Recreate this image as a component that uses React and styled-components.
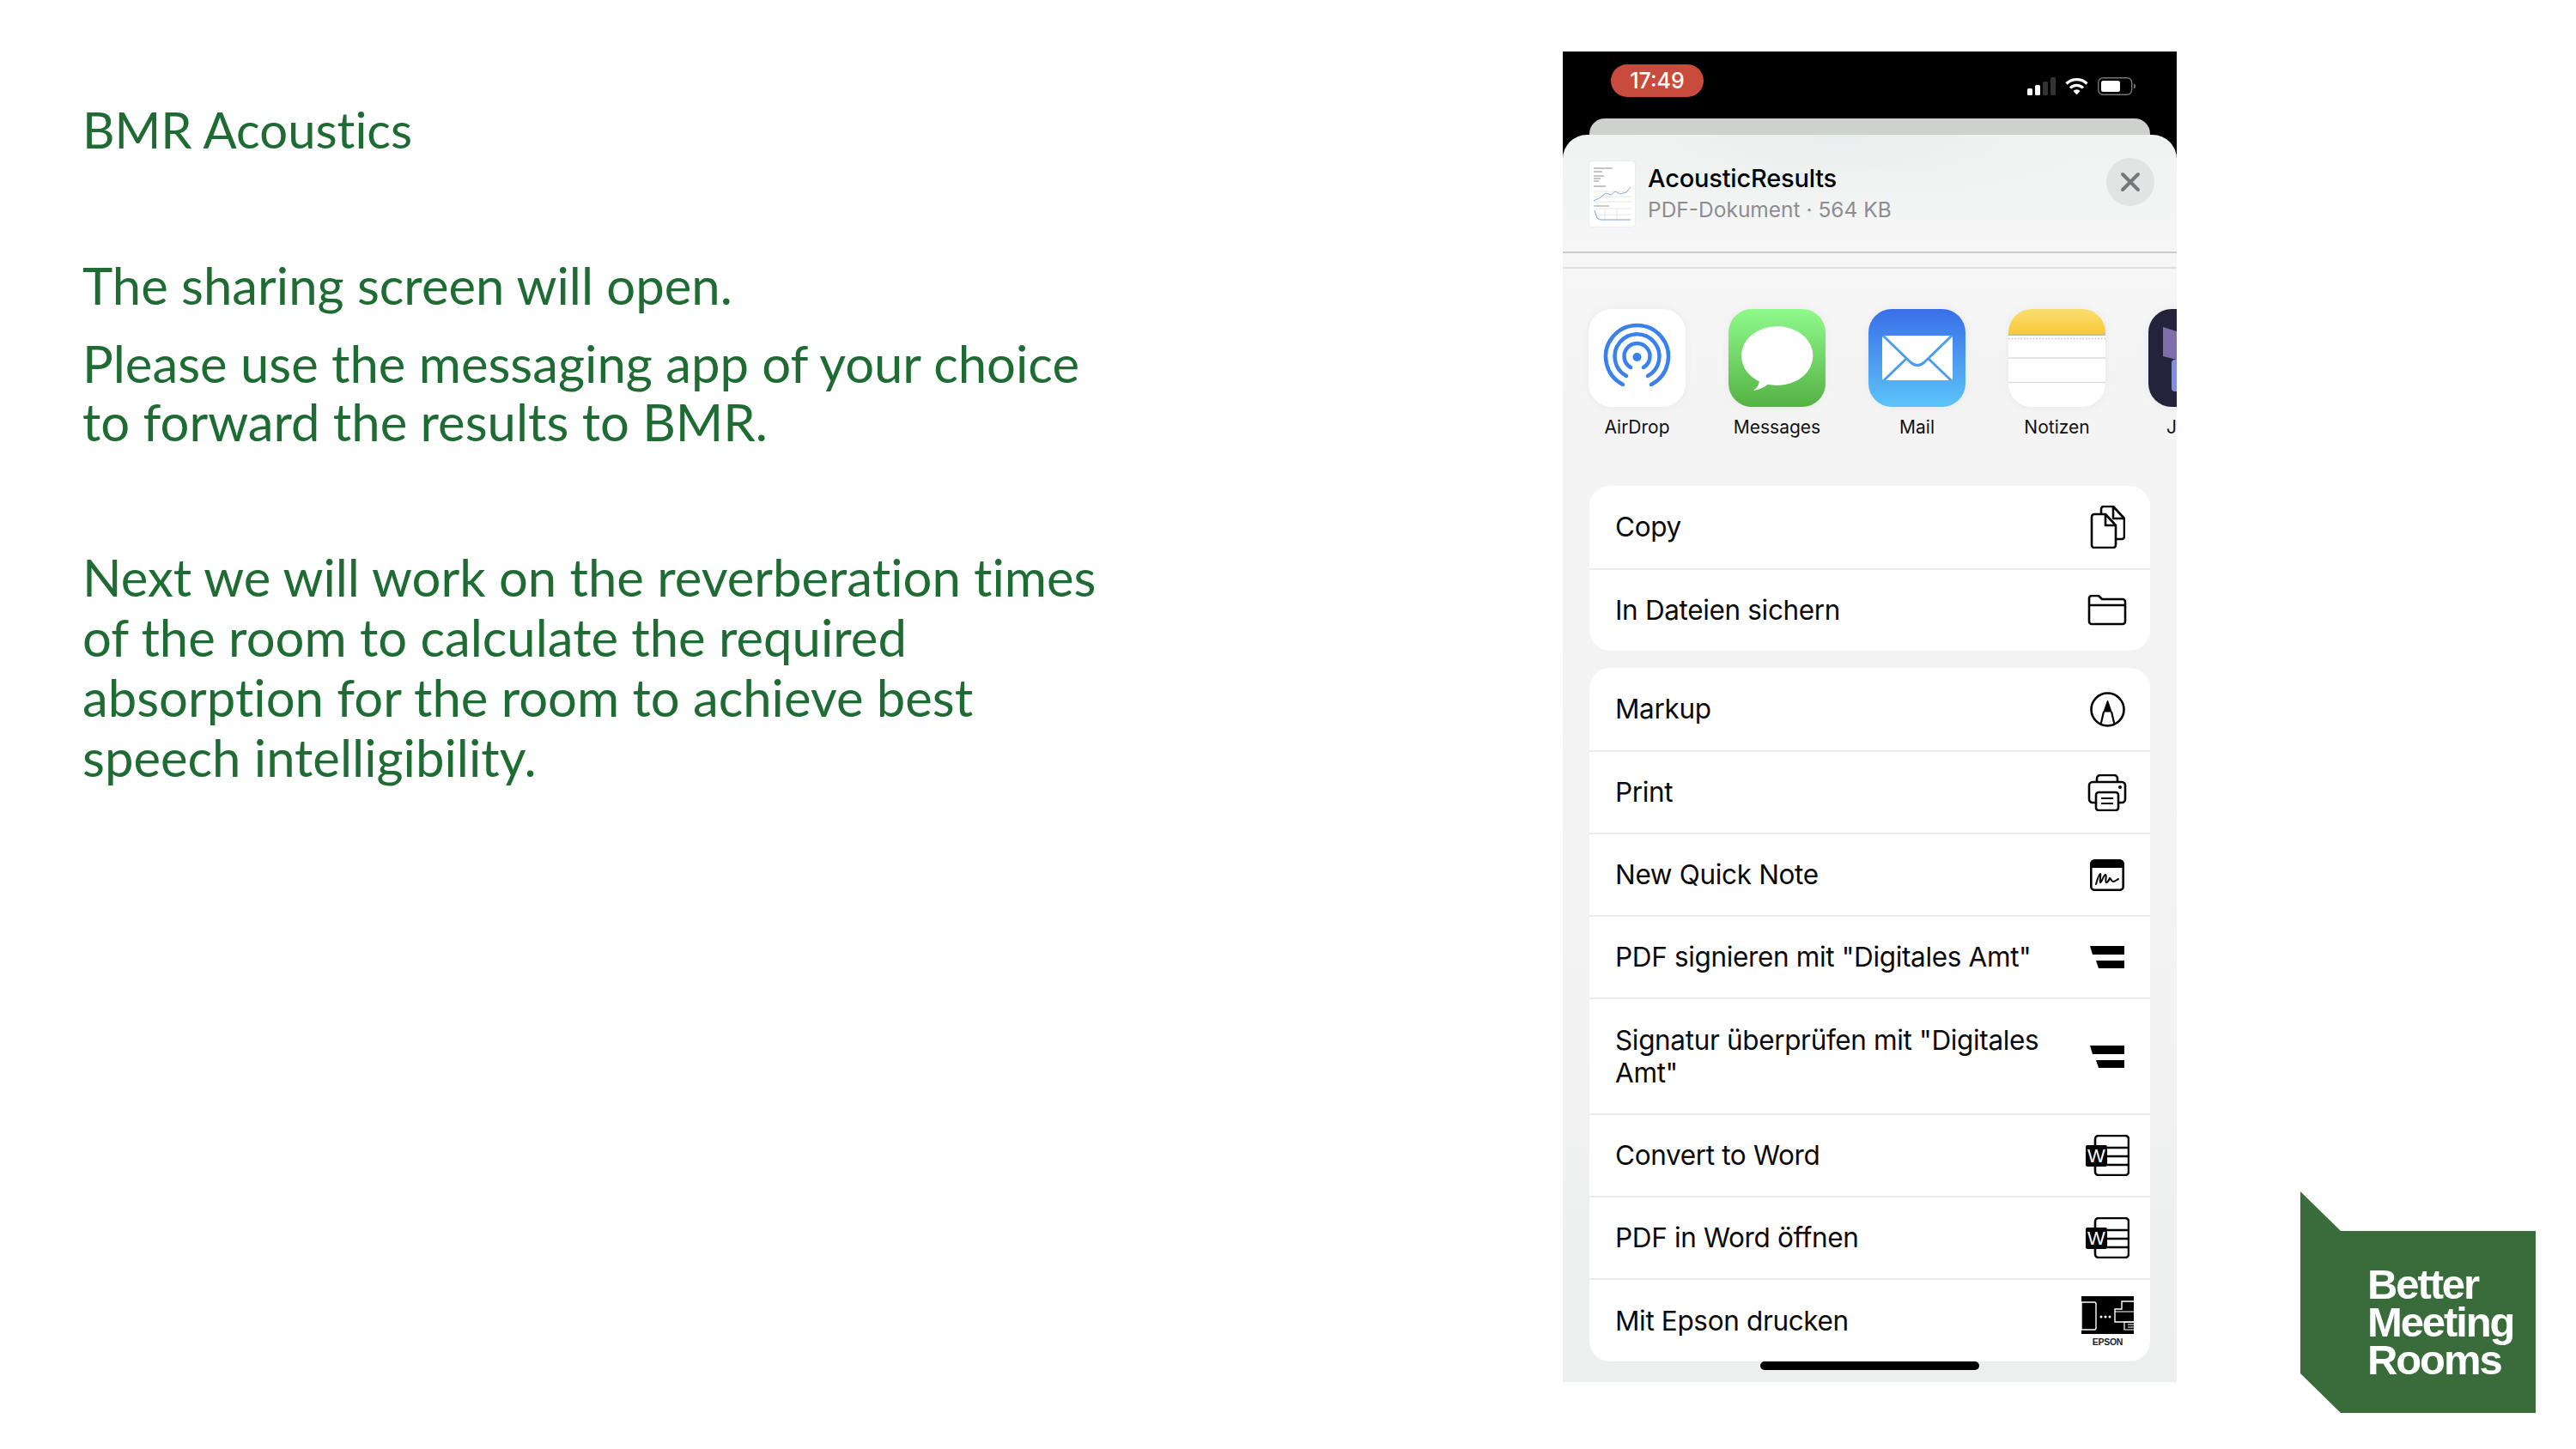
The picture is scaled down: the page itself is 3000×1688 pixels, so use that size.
import React from "react";
import styled, { createGlobalStyle } from "styled-components";

const Global = createGlobalStyle`
  html, body { margin: 0; padding: 0; background: #fff; }
  * { box-sizing: border-box; }
`;

const Page = styled.div`
  width: 3000px; height: 1688px; display: flex; align-items: flex-start;
  padding: 60px 47px 42px 96px; background: #fff; overflow: hidden;
`;
const Copy = styled.div`
  flex: 0 0 1724px; padding-top: 56px; color: #1e6b33;
  font-family: Lato, "Open Sans", sans-serif; font-size: 59.8px; line-height: 70px;
  font-variant-ligatures: none;
`;
const CopyTitle = styled.h1`
  margin: 0; font: inherit; font-size: 58px;
`;
const CopyBlock = styled.p`
  margin: ${p => p.$top}px 0 0; line-height: ${p => p.$lh || 70}px;
`;
const Phone = styled.div`
  flex: 0 0 715px; height: 1550px; background: #000; display: flex; flex-direction: column;
  overflow: hidden; font-family: Inter, "Liberation Sans", sans-serif; color: #000; position: relative;
`;
const StatusBar = styled.div`
  height: 78px; padding: 15px 48px 0 56px; display: flex; justify-content: space-between; align-items: flex-start;
`;
const TimePill = styled.div`
  width: 108px; height: 38px; border-radius: 19px; background: #c84b3e; color: #fff;
  font-size: 25px; font-weight: 500; display: flex; align-items: center; justify-content: center;
`;
const StatusIcons = styled.div`
  display: flex; align-items: flex-end; gap: 11px; margin-top: 15px;
`;
const Peek = styled.div`
  height: 19px; margin: 0 31px; background: #cfd1ce; border-radius: 18px 18px 0 0; flex: none;
`;
const Sheet = styled.div`
  flex: 1; min-height: 0; border-radius: 28px 28px 0 0; overflow: hidden; display: flex; flex-direction: column;
  background:
    radial-gradient(300px 90px at 45% 0%, #e9efee 0%, rgba(233,239,238,0) 100%),
    linear-gradient(180deg, #f0f3f1 0px, #f5f6f5 140px, #f4f4f4 300px, #f3f3f3 900px, #ecefed 1453px);
`;
const Header = styled.div`
  height: 138px; flex: none; padding: 31px 26px 0 31px; display: flex; align-items: flex-start;
  border-bottom: 2px solid #c9cbca;
`;
const Thumb = styled.div`
  width: 53px; height: 76px; background: #fff; border-radius: 4px; flex: none; overflow: hidden;
  box-shadow: 0 0 3px rgba(0,0,0,.08);
`;
const FileText = styled.div`
  margin-left: 15px; padding-top: 1px; line-height: 37px;
`;
const FileName = styled.div`
  font-size: 29px; font-weight: 500; letter-spacing: -0.2px;
`;
const FileMeta = styled.div`
  font-size: 24.5px; color: #8d8d91;
`;
const Close = styled.div`
  margin: -4px 0 0 auto; width: 56px; height: 56px; border-radius: 50%; background: #e2e3e3;
  display: flex; align-items: center; justify-content: center; flex: none;
`;
const Band = styled.div`
  height: 18px; flex: none; border-bottom: 2px solid #dedfde;
`;
const Apps = styled.div`
  flex: none; display: flex; padding: 47px 0 0 30px; gap: 50px; height: 253px; overflow: hidden;
`;
const App_ = styled.div`
  flex: 0 0 113px; display: flex; flex-direction: column; align-items: center;
`;
const AppIcon = styled.div`
  width: 113px; height: 114px; border-radius: 27px; overflow: hidden; flex: none;
  background: ${p => p.$bg};
  box-shadow: 0 0 12px rgba(0,0,0,.05);
  svg { display: block; }
`;
const AppLabel = styled.div`
  margin-top: 11px; font-size: 21px; line-height: 25px; white-space: nowrap; color: #111;
  ${p => p.$clip && "align-self: flex-start; padding-left: 21px;"}
`;
const Groups = styled.div`
  padding: 0 31px; display: flex; flex-direction: column; gap: 20px;
`;
const Card = styled.div`
  background: #fff; border-radius: 24px; overflow: hidden;
`;
const Row = styled.div`
  display: flex; align-items: center; padding-left: 30px; height: ${p => p.$h || 96}px;
  & + & { border-top: 2px solid #ebebeb; }
`;
const RowText = styled.div`
  flex: 1; font-size: 31.5px; line-height: 38px; letter-spacing: -0.35px; color: #0a0a0a; min-width: 0;
`;
const RowIcon = styled.div`
  flex: none; width: 66px; margin: 0 17px 0 8px; display: flex; justify-content: center; align-items: center;
  svg { display: block; }
`;
const HomeBar = styled.div`
  position: absolute; left: 230px; bottom: 14px; width: 255px; height: 10px; border-radius: 5px; background: #000;
`;
const Logo = styled.div`
  margin: auto 0 0 auto; width: 274px; height: 258px; flex: none; background: #3a6b3b;
  clip-path: polygon(0 0, 47px 46px, 100% 46px, 100% 100%, 47px 100%, 0 212px);
  padding: 86px 0 0 78px; color: #fff; font-family: "Liberation Sans", Arial, sans-serif;
  font-weight: 700; font-size: 49px; line-height: 44px; letter-spacing: -2.1px;
`;

const Icon = {
  copy: (
    <svg width="41" height="50" viewBox="0 0 41 50" fill="none" stroke="#000" strokeWidth="2.6" strokeLinejoin="round">
      <path d="M13 9V4a3 3 0 0 1 3-3h11l13 14v21a3 3 0 0 1-3 3h-6" />
      <path d="M27 1v14h13" />
      <path d="M5 10h13l12 13v23a3 3 0 0 1-3 3H5a3 3 0 0 1-3-3V13a3 3 0 0 1 3-3z" fill="#fff" />
      <path d="M18 10v13h12" />
    </svg>
  ),
  folder: (
    <svg width="46" height="36" viewBox="0 0 46 36" fill="none" stroke="#000" strokeWidth="2.6" strokeLinejoin="round">
      <path d="M2 9V4a3 3 0 0 1 3-3h8l4 4h24a3 3 0 0 1 3 3v23a3 3 0 0 1-3 3H5a3 3 0 0 1-3-3z" />
      <path d="M2 12h42" />
    </svg>
  ),
  markup: (
    <svg width="41" height="41" viewBox="0 0 41 41" fill="none" stroke="#000" strokeWidth="2.6">
      <circle cx="20.5" cy="20.5" r="19" />
      <path d="M20.5 10l4.5 13h-9z" fill="#000" strokeWidth="1" strokeLinejoin="round" />
      <path d="M16 23l-3.5 15M25 23l3.5 15" strokeWidth="2.2" />
    </svg>
  ),
  print: (
    <svg width="46" height="43" viewBox="0 0 46 43" fill="none" stroke="#000" strokeWidth="2.6" strokeLinejoin="round">
      <path d="M11 9V5a4 4 0 0 1 4-4h16a4 4 0 0 1 4 4v4" />
      <path d="M10 33H6a4 4 0 0 1-4-4V13a4 4 0 0 1 4-4h34a4 4 0 0 1 4 4v16a4 4 0 0 1-4 4h-4" />
      <rect x="10" y="21" width="26" height="21" rx="3" fill="#fff" />
      <path d="M16 28h14M16 34h14" strokeWidth="2.2" />
      <circle cx="38" cy="15" r="2" fill="#000" stroke="none" />
    </svg>
  ),
  note: (
    <svg width="40" height="37" viewBox="0 0 40 37" fill="none" stroke="#000" strokeWidth="2.6">
      <rect x="1.3" y="1.3" width="37.4" height="34.4" rx="4" />
      <path d="M1 5a4 4 0 0 1 4-4h30a4 4 0 0 1 4 4v5H1z" fill="#000" stroke="none" />
      <path d="M7 29c2-7 4-12 5-12s-1 9 0 10c2-1 4-9 6-9s-1 8 1 9c2 0 3-3 4-5 1 0 2 4 4 4s4-2 6-3" strokeWidth="2" strokeLinecap="round" />
    </svg>
  ),
  digi: (
    <svg width="40" height="26" viewBox="0 0 40 26" fill="#000">
      <path d="M0 0h40v10H3z" />
      <path d="M7 17h33v9H10z" />
    </svg>
  ),
  word: (
    <svg width="51" height="48" viewBox="0 0 51 48" fill="none" stroke="#000" strokeWidth="2.6">
      <path d="M11 12V5a4 4 0 0 1 4-4h31a4 4 0 0 1 4 4v38a4 4 0 0 1-4 4H15a4 4 0 0 1-4-4v-6" />
      <path d="M25 15h25M25 25h25M25 35h25" />
      <rect x="0" y="12" width="25" height="25" rx="2" fill="#000" stroke="none" />
      <text x="12.5" y="32" textAnchor="middle" fill="#fff" stroke="none" fontFamily="Liberation Sans, sans-serif" fontSize="22">W</text>
    </svg>
  ),
  epson: (
    <svg width="61" height="58" viewBox="0 0 61 58">
      <rect width="61" height="44" fill="#000" />
      <path d="M0 7h15a2 2 0 0 1 2 2v28a2 2 0 0 1-2 2H0z" fill="#000" stroke="#fff" strokeWidth="1.4" />
      <circle cx="23" cy="24" r="1.5" fill="#fff" /><circle cx="28" cy="24" r="1.5" fill="#fff" /><circle cx="33" cy="24" r="1.5" fill="#fff" />
      <path d="M61 6H47v9h-8v15h22" fill="#000" stroke="#fff" strokeWidth="1.4" />
      <path d="M61 18H39M61 30H50v9h11M54 33h7M54 36h7" fill="none" stroke="#fff" strokeWidth="1.2" />
      <text x="30.500" y="57" textAnchor="middle" fontFamily="Liberation Sans, sans-serif" fontWeight="700" fontSize="10.500" letterSpacing="-.3" fill="#222">EPSON</text>
    </svg>
  ),
};

const AirDrop = () => (
  <svg width="113" height="114" viewBox="0 0 113 114" fill="none" stroke="#3a80ee" strokeWidth="4.5" strokeLinecap="round">
    <path d="M40 88A36.500 36.500 0 1 1 73 88" />
    <path d="M44 78A26 26 0 1 1 69 78" />
    <path d="M49 68A15 15 0 1 1 64 68" />
    <circle cx="56.500" cy="56" r="5" fill="#3a80ee" stroke="none" />
  </svg>
);
const MessagesArt = () => (
  <svg width="113" height="114" viewBox="0 0 113 114">
    <ellipse cx="56.700" cy="54.500" rx="41.700" ry="34.500" fill="#fff" />
    <path d="M36 82c0 6-3 10-7 13 6-1 12-3 18-8z" fill="#fff" />
  </svg>
);
const MailArt = () => (
  <svg width="113" height="114" viewBox="0 0 113 114" fill="none">
    <rect x="16" y="31" width="82" height="52" rx="3" fill="#fff" />
    <path d="M17 31l32 31q8 7 16 0l32-31M18 83l27-26M96 83L69 57" stroke="#4e9cf0" strokeWidth="3" />
  </svg>
);
const NotesArt = () => (
  <svg width="113" height="114" viewBox="0 0 113 114">
    <defs>
      <linearGradient id="ny" x1="0" y1="0" x2="0" y2="1"><stop offset="0" stopColor="#f9de70" /><stop offset="1" stopColor="#f8c93a" /></linearGradient>
    </defs>
    <rect width="113" height="29" fill="url(#ny)" />
    <rect y="29" width="113" height="2" fill="#bdbdb8" />
    <path d="M0 34.500h113" stroke="#c4c4c4" strokeWidth="1.600" strokeDasharray="1.600 2" />
    <path d="M0 57h113M0 85.500h113" stroke="#dcdcdc" strokeWidth="1.600" />
  </svg>
);
const JoinArt = () => (
  <svg width="113" height="114" viewBox="0 0 113 114">
    <path d="M17 21l16 5v33l-16-4z" fill="#7f6ea8" />
    <rect x="27" y="59" width="20" height="37" rx="4" fill="#7f8fe0" />
  </svg>
);

const Doc = () => (
  <svg width="53" height="76" viewBox="0 0 53 76" fill="none">
    <path d="M5 8h22M5 12h10M5 17h12M5 20h8M5 23h6M5 29h14" stroke="#8a8a8a" strokeWidth="1" />
    <path d="M5 35h44M5 41h44M5 47h44" stroke="#e0e0e0" strokeWidth=".8" />
    <path d="M5 46l8-4 6-5 6 2 5-4 6 3 7-2 5-6" stroke="#8fa8d8" strokeWidth="1" />
    <path d="M5 52h18" stroke="#999" strokeWidth="1" />
    <path d="M5 55h44M5 62h44M18 55v15M32 55v15" stroke="#e2e2e2" strokeWidth=".8" />
    <path d="M6 57l3 9 4 2h35" stroke="#7f9bd6" strokeWidth="1" />
  </svg>
);

const StatusGlyphs = () => (
  <StatusIcons>
    <svg width="33" height="21" viewBox="0 0 33 21">
      <rect x="0" y="13" width="6" height="8" rx="1.500" fill="#fff" />
      <rect x="9" y="9" width="6" height="12" rx="1.500" fill="#fff" />
      <rect x="18" y="5" width="6" height="16" rx="1.500" fill="#333" />
      <rect x="27" y="0" width="6" height="21" rx="1.500" fill="#333" />
    </svg>
    <svg width="27" height="21" viewBox="0 0 27 21" fill="none" stroke="#fff" strokeWidth="3.200">
      <path d="M1.500 7.500a17 17 0 0 1 24 0" />
      <path d="M6 12.500a10.500 10.500 0 0 1 15 0" />
      <path d="M13.500 20.500l-4-4.600a5.500 5.500 0 0 1 8 0z" fill="#fff" stroke="none" />
    </svg>
    <svg width="44" height="21" viewBox="0 0 44 21" fill="none">
      <rect x=".7" y=".7" width="39" height="19.600" rx="5.500" stroke="#777" strokeWidth="1.400" />
      <rect x="4" y="4" width="22" height="13" rx="2.500" fill="#fff" />
      <path d="M42 7.500a3.200 3.200 0 0 1 0 6z" fill="#777" />
    </svg>
  </StatusIcons>
);

const apps = [
  { label: "AirDrop", bg: "#fff", art: <AirDrop /> },
  { label: "Messages", bg: "linear-gradient(180deg,#90fa8d,#54b243)", art: <MessagesArt /> },
  { label: "Mail", bg: "linear-gradient(180deg,#3a6fe9,#5cc4f9)", art: <MailArt /> },
  { label: "Notizen", bg: "#fff", art: <NotesArt /> },
  { label: "J", bg: "#23243b", art: <JoinArt />, clip: true },
];
const first = [
  { t: "Copy", i: Icon.copy },
  { t: "In Dateien sichern", i: Icon.folder },
];
const second = [
  { t: "Markup", i: Icon.markup },
  { t: "Print", i: Icon.print },
  { t: "New Quick Note", i: Icon.note },
  { t: 'PDF signieren mit "Digitales Amt"', i: Icon.digi },
  { t: 'Signatur überprüfen mit "Digitales Amt"', i: Icon.digi, h: 135 },
  { t: "Convert to Word", i: Icon.word },
  { t: "PDF in Word öffnen", i: Icon.word },
  { t: "Mit Epson drucken", i: Icon.epson, h: 97 },
];
const Rows = ({ items }) => (
  <Card>
    {items.map(r => (
      <Row key={r.t} $h={r.h}>
        <RowText>{r.t}</RowText>
        <RowIcon>{r.i}</RowIcon>
      </Row>
    ))}
  </Card>
);

export default function App() {
  return (
    <Page>
      <Global />
      <Copy>
        <CopyTitle>BMR Acoustics</CopyTitle>
        <CopyBlock $top={111}>The sharing screen will open.</CopyBlock>
        <CopyBlock $top={22} $lh={68}>Please use the messaging app of your choice<br />to forward the results to BMR.</CopyBlock>
        <CopyBlock $top={112}>Next we will work on the reverberation times<br />of the room to calculate the required<br />absorption for the room to achieve best<br />speech intelligibility.</CopyBlock>
      </Copy>
      <Phone>
        <StatusBar>
          <TimePill>17:49</TimePill>
          <StatusGlyphs />
        </StatusBar>
        <Peek />
        <Sheet>
          <Header>
            <Thumb><Doc /></Thumb>
            <FileText>
              <FileName>AcousticResults</FileName>
              <FileMeta>PDF-Dokument · 564 KB</FileMeta>
            </FileText>
            <Close>
              <svg width="24" height="24" viewBox="0 0 24 24" stroke="#77777b" strokeWidth="4" strokeLinecap="round">
                <path d="M3 3l18 18M21 3L3 21" />
              </svg>
            </Close>
          </Header>
          <Band />
          <Apps>
            {apps.map(a => (
              <App_ key={a.label}>
                <AppIcon $bg={a.bg}>{a.art}</AppIcon>
                <AppLabel $clip={a.clip}>{a.label}</AppLabel>
              </App_>
            ))}
          </Apps>
          <Groups>
            <Rows items={first} />
            <Rows items={second} />
          </Groups>
        </Sheet>
        <HomeBar />
      </Phone>
      <Logo>Better<br />Meeting<br />Rooms</Logo>
    </Page>
  );
}
